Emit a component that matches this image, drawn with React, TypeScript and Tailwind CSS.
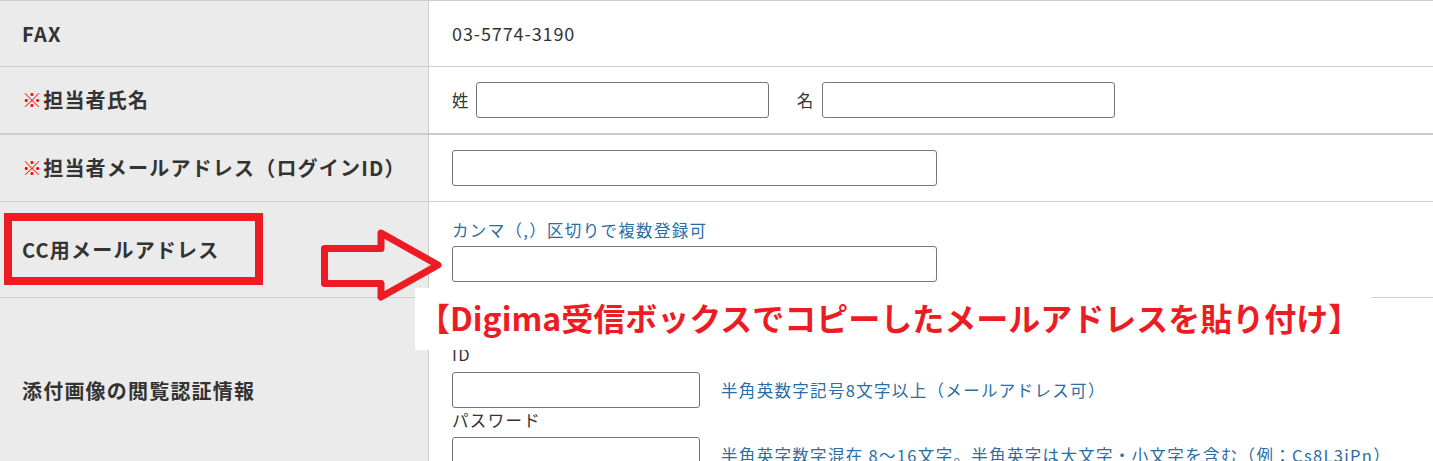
import React from "react";

const font = { fontFamily: '"Noto Sans CJK JP", "Noto Sans", sans-serif' };

function Label({ children }: { children: React.ReactNode }) {
  return (
    <div className="w-[429px] shrink-0 self-stretch bg-[#ebebeb] border-r border-[#cccccc] pl-[22px] flex items-center text-[20px] font-bold tracking-[0.06em] text-[#333333]">
      {children}
    </div>
  );
}

function Req() {
  return <span className="text-[#ff0000]">※</span>;
}

function Input({ className }: { className: string }) {
  return <div className={`h-[36px] bg-white border border-[#767676] rounded-[3px] ${className}`} />;
}

export default function App() {
  return (
    <div
      className="relative w-[1433px] h-[461px] overflow-hidden bg-white text-[16.5px] tracking-[0.08em] text-[#333333]"
      style={font}
    >
      {/* Row 1 */}
      <div className="flex h-[67px] border-t border-b border-[#cccccc]">
        <Label>FAX</Label>
        <div className="flex-1 flex items-center pl-[23px] text-[18px] tracking-[0.05em]">03-5774-3190</div>
      </div>
      {/* Row 2 */}
      <div className="flex h-[68px] border-b-2 border-[#cccccc]">
        <Label>
          <Req />
          担当者氏名
        </Label>
        <div className="flex-1 flex items-center pl-[23px]">
          <span className="mr-[6px]">姓</span>
          <Input className="w-[293px]" />
          <span className="ml-[28px] mr-[7px]">名</span>
          <Input className="w-[293px]" />
        </div>
      </div>
      {/* Row 3 */}
      <div className="flex h-[67px] border-b border-[#cccccc]">
        <Label>
          <Req />
          担当者メールアドレス（ログインID）
        </Label>
        <div className="flex-1 flex items-center pl-[23px]">
          <Input className="w-[485px]" />
        </div>
      </div>
      {/* Row 4 */}
      <div className="flex h-[96px] border-b border-[#cccccc]">
        <Label>CC用メールアドレス</Label>
        <div className="flex-1 flex flex-col justify-center pl-[23px]">
          <div className="leading-[24px] text-[#2b6ca3] mt-[1px]">カンマ（,）区切りで複数登録可</div>
          <Input className="w-[485px] mt-[4px]" />
        </div>
      </div>
      {/* Row 5 */}
      <div className="flex h-[186px] border-b border-[#cccccc]">
        <Label>添付画像の閲覧認証情報</Label>
        <div className="flex-1 flex flex-col pl-[23px] pt-[44px]">
          <div className="leading-[24px]">ID</div>
          <div className="flex items-center mt-[6px]">
            <Input className="w-[248px]" />
            <span className="ml-[21px] text-[#2b6ca3]">半角英数字記号8文字以上（メールアドレス可）</span>
          </div>
          <div className="leading-[24px]">パスワード</div>
          <div className="flex items-center mt-[5px]">
            <Input className="w-[248px]" />
            <span className="ml-[21px] text-[#2b6ca3] whitespace-nowrap">
              半角英字数字混在 8〜16文字。半角英字は大文字・小文字を含む（例：Cs8L3iPn）
            </span>
          </div>
        </div>
      </div>

      {/* Annotation: red box */}
      <div className="absolute left-[4px] top-[213px] w-[259px] h-[72px] border-[8px] border-[#ed1c24]" />

      {/* Annotation: arrow */}
      <svg
        className="absolute left-[316px] top-[225px]"
        width="130"
        height="80"
        viewBox="0 0 130 80"
        fill="none"
      >
        <path
          d="M8.5 23.5 H65 V8 L122 40 L65 72 V58.5 H8.5 Z"
          stroke="#ed1c24"
          strokeWidth="7"
          strokeLinejoin="round"
        />
      </svg>

      {/* Annotation: text box */}
      <div className="absolute left-[415px] top-[288px] w-[957px] h-[62px] bg-white flex items-center pl-[3px] pb-[4px]">
        <span className="text-[32px] font-bold tracking-normal text-[#ed1c24] whitespace-nowrap">
          【Digima受信ボックスでコピーしたメールアドレスを貼り付け】
        </span>
      </div>
    </div>
  );
}
